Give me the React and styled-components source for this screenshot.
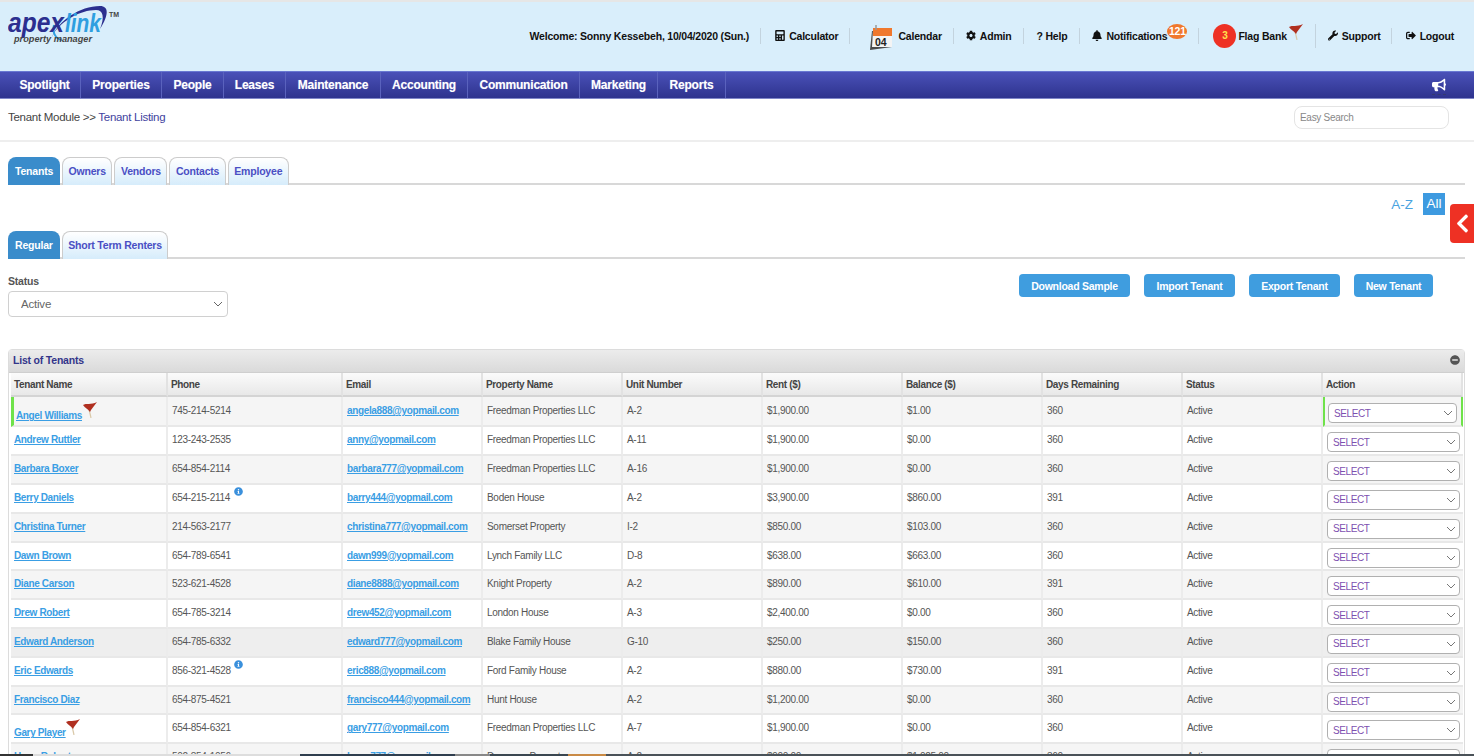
import React from 'react';
import styled, { createGlobalStyle } from 'styled-components';
import { FaBell, FaBullhorn, FaCalculator, FaChevronLeft, FaCog, FaInfoCircle, FaMinusCircle, FaSignOutAlt, FaWrench } from 'react-icons/fa';

const chevron = (color) =>
  `url("data:image/svg+xml,%3Csvg xmlns='http://www.w3.org/2000/svg' width='10' height='6' viewBox='0 0 10 6'%3E%3Cpath d='M1 1l4 4 4-4' fill='none' stroke='${color}' stroke-width='1'/%3E%3C/svg%3E")`;

const GlobalStyle = createGlobalStyle`
  html, body {
    margin: 0;
    height: 100vh;
    overflow: hidden;
    background: #fff;
    font-family: "Liberation Sans", Arial, sans-serif;
  }
`;

const Page = styled.div`
  position: relative;
  height: 756px;
  overflow: hidden;
  border-top: 2px solid #e6e6e6;
  box-sizing: border-box;
`;

const Header = styled.header`
  height: 69px;
  background: #d9eefb;
  display: flex;
  align-items: center;
  justify-content: space-between;
  padding: 0 20px 0 8px;
`;

const LogoBox = styled.div`
  align-self: flex-start;
  margin-top: 1px;
  height: 44px;
`;

const UserBar = styled.div`
  display: flex;
  align-items: center;
  margin-bottom: 2px;
`;

const UserItem = styled.div`
  display: flex;
  align-items: center;
  position: relative;
  gap: ${(p) => p.$gap ?? 4}px;
  height: ${(p) => (p.$tall ? 24 : 16)}px;
  padding: 0 ${(p) => p.$right ?? 11}px 0 ${(p) => p.$left ?? 14}px;
  border-right: ${(p) => (p.$last ? 'none' : '1px solid #c3d3de')};
  font-size: 10.5px;
  font-weight: 700;
  letter-spacing: -0.2px;
  color: #111;
  white-space: nowrap;
  svg.fa { font-size: 11px; width: 10px; }
  svg.cal { margin-top: 5px; }
  svg.flag { margin-top: -8px; }
`;

const NoteBadge = styled.span`
  position: absolute;
  right: 11px;
  top: -4px;
  width: 20px;
  height: 15px;
  border-radius: 50%;
  background: #f0782d;
  color: #fff;
  font-size: 10.5px;
  line-height: 15px;
  text-align: center;
`;

const FlagCount = styled.span`
  width: 23px;
  height: 24px;
  border-radius: 50%;
  background: #ee3124;
  color: #ffe14d;
  font-size: 10px;
  line-height: 24px;
  text-align: center;
`;

const Nav = styled.nav`
  height: 28px;
  box-sizing: border-box;
  display: flex;
  align-items: stretch;
  justify-content: space-between;
  border-top: 1px solid #6878d2;
  border-bottom: 1px solid #7f86c8;
  background: linear-gradient(#4a51b8, #2e338e);
`;

const NavList = styled.div`
  display: flex;
`;

const NavItem = styled.div`
  display: flex;
  align-items: center;
  width: ${(p) => p.$w}px;
  box-sizing: border-box;
  justify-content: center;
  padding-left: ${(p) => p.$pad ?? 0}px;
  border-right: 1px solid #5a62bd;
  color: #fff;
  font-size: 12px;
  font-weight: 700;
  letter-spacing: -0.2px;
  text-shadow: 0 0 1px rgba(255, 255, 255, 0.4);
`;

const Horn = styled.div`
  display: flex;
  align-items: center;
  padding-right: 28px;
  color: #fff;
  font-size: 14px;
`;

const HornMark = styled.span`
  display: flex;
  padding-bottom: 2px;
  margin-top: 3px;
  border-bottom: 1px dashed #333a70;
`;

const Crumbs = styled.div`
  height: 43px;
  box-sizing: border-box;
  border-bottom: 2px solid #eeeeee;
  display: flex;
  justify-content: space-between;
  padding: 7px 25px 0 8px;
  font-size: 11.5px;
  letter-spacing: -0.28px;
  line-height: 23px;
  color: #444;
`;

const CrumbLink = styled.span`
  color: #3f43a0;
`;

const EasySearch = styled.input`
  width: 155px;
  height: 23px;
  box-sizing: border-box;
  border: 1px solid #e4e4e4;
  border-radius: 8px;
  padding: 0 5px;
  font: 10px "Liberation Sans", Arial, sans-serif;
  letter-spacing: -0.3px;
  &::placeholder { color: #888; }
`;

const Main = styled.main`
  padding: 15px 9px 0 8px;
`;

const TabRow = styled.div`
  display: flex;
  gap: 2px;
  height: 28px;
  border-bottom: 2px solid #d8d8d8;
  box-sizing: border-box;
`;

const Tab = styled.div`
  box-sizing: border-box;
  height: 28px;
  padding: 0 ${(p) => (p.$active ? 7 : 5.5)}px;
  border-radius: 8px 8px 0 0;
  border: ${(p) => (p.$active ? 'none' : '1px solid #cccccc')};
  border-bottom: none;
  background: ${(p) => (p.$active ? '#3a8ccb' : 'linear-gradient(#ffffff, #d6ecfb)')};
  color: ${(p) => (p.$active ? '#fff' : '#4a4fc4')};
  font-size: 10.5px;
  font-weight: 700;
  letter-spacing: -0.2px;
  line-height: ${(p) => (p.$active ? 29 : 27)}px;
`;

const AlphaRow = styled.div`
  display: flex;
  justify-content: flex-end;
  align-items: center;
  gap: 10px;
  height: 22px;
  margin: 8px 20px 16px 0;
  font-size: 13.5px;
  color: #4aa3df;
`;

const AllChip = styled.span`
  width: 22px;
  height: 22px;
  background: #3d9ae0;
  color: #fff;
  text-align: center;
  line-height: 22px;
`;

const SideTab = styled.div`
  position: absolute;
  right: 0;
  top: 202px;
  width: 24px;
  height: 39px;
  border-radius: 4px 0 0 4px;
  background: #ee3124;
  color: #fff;
  display: flex;
  align-items: center;
  justify-content: center;
  font-size: 21px;
`;

const FilterRow = styled.div`
  display: flex;
  justify-content: space-between;
  height: 90px;
  padding-top: 16px;
  box-sizing: border-box;
`;

const FieldLabel = styled.div`
  font-size: 10.5px;
  font-weight: 700;
  letter-spacing: -0.2px;
  color: #555;
  line-height: 12px;
  margin-bottom: 4px;
`;

const StatusSelect = styled.select`
  appearance: none;
  width: 220px;
  height: 26px;
  box-sizing: border-box;
  border: 1px solid #d0d0d0;
  border-radius: 4px;
  padding: 0 0 0 12px;
  background: #fff ${chevron('%23666')} no-repeat right 4px center;
  font: 11.5px "Liberation Sans", Arial, sans-serif;
  letter-spacing: -0.2px;
  color: #666;
`;

const ButtonRow = styled.div`
  display: flex;
  gap: 14px;
  margin-top: -1px;
  padding-right: 32px;
`;

const ActionButton = styled.button`
  height: 23px;
  box-sizing: border-box;
  width: ${(p) => p.$w}px;
  border: none;
  border-radius: 4px;
  background: #3f9ddf;
  color: #fff;
  font: 700 10.5px "Liberation Sans", Arial, sans-serif;
  letter-spacing: -0.25px;
`;

const Panel = styled.section`
  border: 1px solid #dcdcdc;
  border-radius: 4px 4px 0 0;
  padding: 0 2px;
`;

const PanelHead = styled.div`
  height: 20px;
  margin: 0 -2px;
  padding: 0 4px 2px;
  display: flex;
  align-items: center;
  justify-content: space-between;
  background: linear-gradient(#ececec, #dadada);
  border-bottom: 1px solid #cfcfcf;
  font-size: 10.5px;
  font-weight: 700;
  letter-spacing: -0.2px;
  color: #33358a;
  svg { color: #555; font-size: 10px; }
`;

const Table = styled.table`
  width: 1452px;
  table-layout: fixed;
  border-collapse: separate;
  border-spacing: 0;
  font-size: 10px;
  letter-spacing: -0.3px;
  color: #555;
`;

const HeadCell = styled.th`
  height: 24px;
  padding: 0 3px;
  box-sizing: border-box;
  text-align: left;
  font-size: 10px;
  font-weight: 700;
  letter-spacing: -0.35px;
  color: #444;
  background: linear-gradient(#fbfbfb, #e8e8e8);
  border-right: 2px solid #e2e2e2;
  border-bottom: 2px solid #d4d4d4;
`;

const Row = styled.tr`
  background: ${(p) => (p.$hover ? '#eeeeee' : p.$odd ? '#f5f5f5' : '#fff')};
`;

const Cell = styled.td`
  box-sizing: border-box;
  height: ${(p) => (p.$first ? 30.4 : 28.8)}px;
  padding: ${(p) => (p.$first ? 7 : 6)}px 4px 0 4px;
  vertical-align: top;
  line-height: 13px;
  border-right: 2px solid #ececec;
  border-bottom: 2px solid #e8e8e8;
  overflow: visible;
  white-space: nowrap;
  position: relative;
`;

const NameCell = styled(Cell)`
  padding-left: ${(p) => (p.$first ? 2 : 3)}px;
  padding-top: ${(p) => (p.$first ? 12 : p.$flag ? 11 : 6)}px;
  border-left: ${(p) => (p.$first ? '3px solid #6fe24a' : 'none')};
`;

const ActionCell = styled(Cell)`
  padding: ${(p) => (p.$first ? '6px 4px 0 3px' : '5px 3px 0 4px')};
  border-left: ${(p) => (p.$first ? '2px solid #6fe24a' : 'none')};
  border-right: ${(p) => (p.$first ? '2px solid #6fe24a' : 'none')};
`;

const RowLink = styled.a`
  color: #3a9ee4;
  font-weight: 700;
  letter-spacing: -0.36px;
  text-decoration: underline;
`;

const FlagMark = styled.span`
  position: absolute;
  left: ${(p) => p.$x}px;
  top: ${(p) => p.$y}px;
`;

const InfoMark = styled.span`
  position: absolute;
  left: 66px;
  top: 2px;
  color: #3a90dc;
  font-size: 9px;
`;

const RowSelect = styled.select`
  appearance: none;
  display: block;
  width: 100%;
  height: 20px;
  box-sizing: border-box;
  border: 1px solid #b0b0b0;
  border-radius: 4px;
  padding: 0 0 0 5px;
  background: #fff ${chevron('%23777')} no-repeat right 3px center;
  font: 10px "Liberation Sans", Arial, sans-serif;
  letter-spacing: -0.4px;
  color: #7d50b0;
`;

const TaskStrip = styled.div`
  position: absolute;
  left: 0;
  right: 0;
  bottom: 0;
  height: 2px;
  background: linear-gradient(90deg, #333 0 33px, #ddd 33px 300px, #2f3e4e 300px 455px, #888 455px 490px, #3a4650 490px 568px, #c98a45 568px 606px, #4a5258 606px 1474px);
`;

const LogoMark = () => (
  <svg width="112" height="44" viewBox="0 0 112 44">
    <path d="M44 34C50 18 72 3 92 3c9 0 9 9 0 23 5-12 3-19-4-19C72 7 54 18 46 30z" fill="#2b2f8f" />
    <path d="M46 22c-2 8 2 14 8 15" fill="none" stroke="#2e9fe0" strokeWidth="2" />
    <text x="0" y="29" fontFamily="'Liberation Sans', sans-serif" fontSize="28" fontWeight="700" fontStyle="italic" fill="#2b2f8f" textLength="56" lengthAdjust="spacingAndGlyphs">apex</text>
    <text x="57" y="29" fontFamily="'Liberation Sans', sans-serif" fontSize="26" fontWeight="700" fontStyle="italic" fill="#2e9fe0" textLength="36" lengthAdjust="spacingAndGlyphs">link</text>
    <text x="6" y="39" fontFamily="'Liberation Sans', sans-serif" fontSize="8.5" fontWeight="700" fontStyle="italic" fill="#444" textLength="78" lengthAdjust="spacingAndGlyphs">property manager</text>
    <text x="101" y="14" fontFamily="'Liberation Sans', sans-serif" fontSize="7" fontWeight="700" fill="#444">TM</text>
  </svg>
);

const CalendarIcon = () => (
  <svg className="cal" width="24" height="26" viewBox="0 0 24 26">
    <path d="M3 6h20v16L1 25z" fill="#4a4a4a" />
    <path d="M4 5h19v17H3z" fill="#f4f4f4" />
    <path d="M4 3h19v8H4z" fill="#f0782d" />
    <path d="M7 0v5" stroke="#999" strokeWidth="1.5" />
    <text x="6" y="21" fontFamily="'Liberation Sans', sans-serif" fontSize="10.5" fontWeight="700" fill="#222">04</text>
  </svg>
);

const RedFlag = () => (
  <svg className="flag" width="14" height="16" viewBox="0 0 14 16">
    <path d="M6 7l2 9" stroke="#d9c8a8" strokeWidth="1.2" />
    <path d="M0 3C3 1 8 3 14 0c-2 3-4 5-6 8L7 10C5 7 2 6 0 3z" fill="#b03020" />
  </svg>
);

const navItems = [
  ['Spotlight', 81, 9], ['Properties', 81], ['People', 62], ['Leases', 62], ['Maintenance', 95],
  ['Accounting', 87], ['Communication', 112], ['Marketing', 78], ['Reports', 68],
];

const columns = [
  ['Tenant Name', 157], ['Phone', 175], ['Email', 140], ['Property Name', 140], ['Unit Number', 140],
  ['Rent ($)', 140], ['Balance ($)', 140], ['Days Remaining', 140], ['Status', 140], ['Action', 140],
];

const tenants = [
  { name: 'Angel Williams', phone: '745-214-5214', email: 'angela888@yopmail.com', property: 'Freedman Properties LLC', unit: 'A-2', rent: '$1,900.00', balance: '$1.00', days: 360, flag: [69, 5] },
  { name: 'Andrew Ruttler', phone: '123-243-2535', email: 'anny@yopmail.com', property: 'Freedman Properties LLC', unit: 'A-11', rent: '$1,900.00', balance: '$0.00', days: 360 },
  { name: 'Barbara Boxer', phone: '654-854-2114', email: 'barbara777@yopmail.com', property: 'Freedman Properties LLC', unit: 'A-16', rent: '$1,900.00', balance: '$0.00', days: 360 },
  { name: 'Berry Daniels', phone: '654-215-2114', email: 'barry444@yopmail.com', property: 'Boden House', unit: 'A-2', rent: '$3,900.00', balance: '$860.00', days: 391, info: true },
  { name: 'Christina Turner', phone: '214-563-2177', email: 'christina777@yopmail.com', property: 'Somerset Property', unit: 'I-2', rent: '$850.00', balance: '$103.00', days: 360 },
  { name: 'Dawn Brown', phone: '654-789-6541', email: 'dawn999@yopmail.com', property: 'Lynch Family LLC', unit: 'D-8', rent: '$638.00', balance: '$663.00', days: 360 },
  { name: 'Diane Carson', phone: '523-621-4528', email: 'diane8888@yopmail.com', property: 'Knight Property', unit: 'A-2', rent: '$890.00', balance: '$610.00', days: 391 },
  { name: 'Drew Robert', phone: '654-785-3214', email: 'drew452@yopmail.com', property: 'London House', unit: 'A-3', rent: '$2,400.00', balance: '$0.00', days: 360 },
  { name: 'Edward Anderson', phone: '654-785-6332', email: 'edward777@yopmail.com', property: 'Blake Family House', unit: 'G-10', rent: '$250.00', balance: '$150.00', days: 360 },
  { name: 'Eric Edwards', phone: '856-321-4528', email: 'eric888@yopmail.com', property: 'Ford Family House', unit: 'A-2', rent: '$880.00', balance: '$730.00', days: 391, info: true },
  { name: 'Francisco Diaz', phone: '654-875-4521', email: 'francisco444@yopmail.com', property: 'Hunt House', unit: 'A-2', rent: '$1,200.00', balance: '$0.00', days: 360 },
  { name: 'Gary Player', phone: '654-854-6321', email: 'gary777@yopmail.com', property: 'Freedman Properties LLC', unit: 'A-7', rent: '$1,900.00', balance: '$0.00', days: 360, flag: [55, 4] },
  { name: 'Harry Roberts', phone: '502-854-1056', email: 'harry777@yopmail.com', property: 'Dempsey Property', unit: 'A-2', rent: '$900.00', balance: '$1,025.00', days: 360 },
];

const App = () => (
  <Page>
    <GlobalStyle />
    <Header>
      <LogoBox><LogoMark /></LogoBox>
      <UserBar>
        <UserItem $left={0}>Welcome: Sonny Kessebeh, 10/04/2020 (Sun.)</UserItem>
        <UserItem><FaCalculator className="fa" /> Calculator</UserItem>
        <UserItem $left={19} $gap={5}><CalendarIcon /> Calendar</UserItem>
        <UserItem $left={12}><FaCog className="fa" /> Admin</UserItem>
        <UserItem $left={13} $right={12}>? Help</UserItem>
        <UserItem $left={12} $right={31}><FaBell className="fa" /> Notifications<NoteBadge>121</NoteBadge></UserItem>
        <UserItem $gap={2} $right={12} $tall><FlagCount>3</FlagCount> Flag Bank <RedFlag /></UserItem>
        <UserItem $left={12} $right={10}><FaWrench className="fa" /> Support</UserItem>
        <UserItem $last $right={0}><FaSignOutAlt className="fa" /> Logout</UserItem>
      </UserBar>
    </Header>
    <Nav>
      <NavList>
        {navItems.map(([label, w, pad]) => (
          <NavItem key={label} $w={w} $pad={pad}>{label}</NavItem>
        ))}
      </NavList>
      <Horn><HornMark><FaBullhorn /></HornMark></Horn>
    </Nav>
    <Crumbs>
      <div>Tenant Module &gt;&gt; <CrumbLink>Tenant Listing</CrumbLink></div>
      <EasySearch placeholder="Easy Search" />
    </Crumbs>
    <Main>
      <TabRow>
        <Tab $active>Tenants</Tab>
        <Tab>Owners</Tab>
        <Tab>Vendors</Tab>
        <Tab>Contacts</Tab>
        <Tab>Employee</Tab>
      </TabRow>
      <AlphaRow>
        <span>A-Z</span>
        <AllChip>All</AllChip>
      </AlphaRow>
      <TabRow>
        <Tab $active>Regular</Tab>
        <Tab>Short Term Renters</Tab>
      </TabRow>
      <FilterRow>
        <div>
          <FieldLabel>Status</FieldLabel>
          <StatusSelect defaultValue="Active">
            <option>Active</option>
          </StatusSelect>
        </div>
        <ButtonRow>
          <ActionButton $w={111}>Download Sample</ActionButton>
          <ActionButton $w={91}>Import Tenant</ActionButton>
          <ActionButton $w={91}>Export Tenant</ActionButton>
          <ActionButton $w={79}>New Tenant</ActionButton>
        </ButtonRow>
      </FilterRow>
      <Panel>
        <PanelHead>
          List of Tenants
          <FaMinusCircle />
        </PanelHead>
        <Table>
          <colgroup>
            {columns.map(([label, w]) => <col key={label} style={{ width: w }} />)}
          </colgroup>
          <thead>
            <tr>
              {columns.map(([label]) => <HeadCell key={label}>{label}</HeadCell>)}
            </tr>
          </thead>
          <tbody>
            {tenants.map((t, i) => (
              <Row key={t.name} $odd={i % 2 === 0} $hover={i === 8}>
                <NameCell $first={i === 0} $flag={!!t.flag}>
                  <RowLink>{t.name}</RowLink>
                  {t.flag && <FlagMark $x={t.flag[0]} $y={t.flag[1]}><RedFlag /></FlagMark>}
                </NameCell>
                <Cell $first={i === 0}>
                  {t.phone}
                  {t.info && <InfoMark><FaInfoCircle /></InfoMark>}
                </Cell>
                <Cell $first={i === 0}><RowLink>{t.email}</RowLink></Cell>
                <Cell $first={i === 0}>{t.property}</Cell>
                <Cell $first={i === 0}>{t.unit}</Cell>
                <Cell $first={i === 0}>{t.rent}</Cell>
                <Cell $first={i === 0}>{t.balance}</Cell>
                <Cell $first={i === 0}>{t.days}</Cell>
                <Cell $first={i === 0}>Active</Cell>
                <ActionCell $first={i === 0}>
                  <RowSelect defaultValue="SELECT">
                    <option>SELECT</option>
                  </RowSelect>
                </ActionCell>
              </Row>
            ))}
          </tbody>
        </Table>
      </Panel>
    </Main>
    <SideTab><FaChevronLeft /></SideTab>
    <TaskStrip />
  </Page>
);

export default App;
